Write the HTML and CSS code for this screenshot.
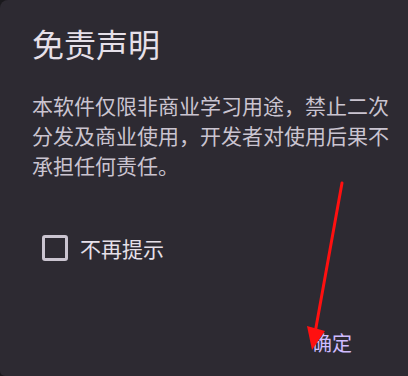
FILE: index.html
```html
<!DOCTYPE html>
<html lang="zh">
<head>
<meta charset="utf-8">
<link rel="stylesheet" href="styles.css">
</head>
<body>
<div class="dialog">
  <h1 class="title">免责声明</h1>
  <p class="body">本软件仅限非商业学习用途，禁止二次分发及商业使用，开发者对使用后果不承担任何责任。</p>
  <label class="check-row"><span class="box"></span><span class="label">不再提示</span></label>
  <div class="actions"><span class="btn">确定</span></div>
</div>
<svg class="arrow" width="408" height="376" viewBox="0 0 408 376">
  <line x1="342" y1="183" x2="315" y2="333" stroke="#ff1010" stroke-width="3" stroke-linecap="round"/>
  <polygon points="307,326 325,331 312,350" fill="#ff1010"/>
</svg>
</body>
</html>
```
FILE: styles.css
```css
html, body {
  margin: 0;
  padding: 0;
}
body {
  width: 408px;
  height: 376px;
  overflow: hidden;
  background: #1a191d;
  font-family: "Noto Sans CJK SC", "Noto Sans", sans-serif;
  position: relative;
}
.dialog {
  width: 408px;
  height: 376px;
  box-sizing: border-box;
  border-radius: 8px 0 0 5px;
  background: #2d2a32;
  padding: 25px 0 0 32px;
}
.title {
  margin: 0;
  font-size: 32px;
  line-height: 36px;
  font-weight: 400;
  color: #e6e0e9;
}
.body {
  margin: 29px 0 0 0;
  width: 362px;
  font-size: 21px;
  line-height: 30px;
  color: #cac4d0;
}
.check-row {
  margin-top: 53px;
  display: flex;
  align-items: center;
  height: 30px;
  padding-left: 10px;
  gap: 12px;
}
.box {
  width: 26px;
  height: 26px;
  box-sizing: border-box;
  border: 3px solid #cac4d0;
  border-radius: 3px;
}
.label {
  font-size: 21px;
  line-height: 30px;
  color: #e6e0e9;
}
.actions {
  margin-top: 68px;
  display: flex;
  justify-content: flex-end;
  padding-right: 56px;
}
.btn {
  font-size: 20px;
  line-height: 24px;
  color: #cfbcff;
}
.arrow {
  position: absolute;
  left: 0;
  top: 0;
}
```
